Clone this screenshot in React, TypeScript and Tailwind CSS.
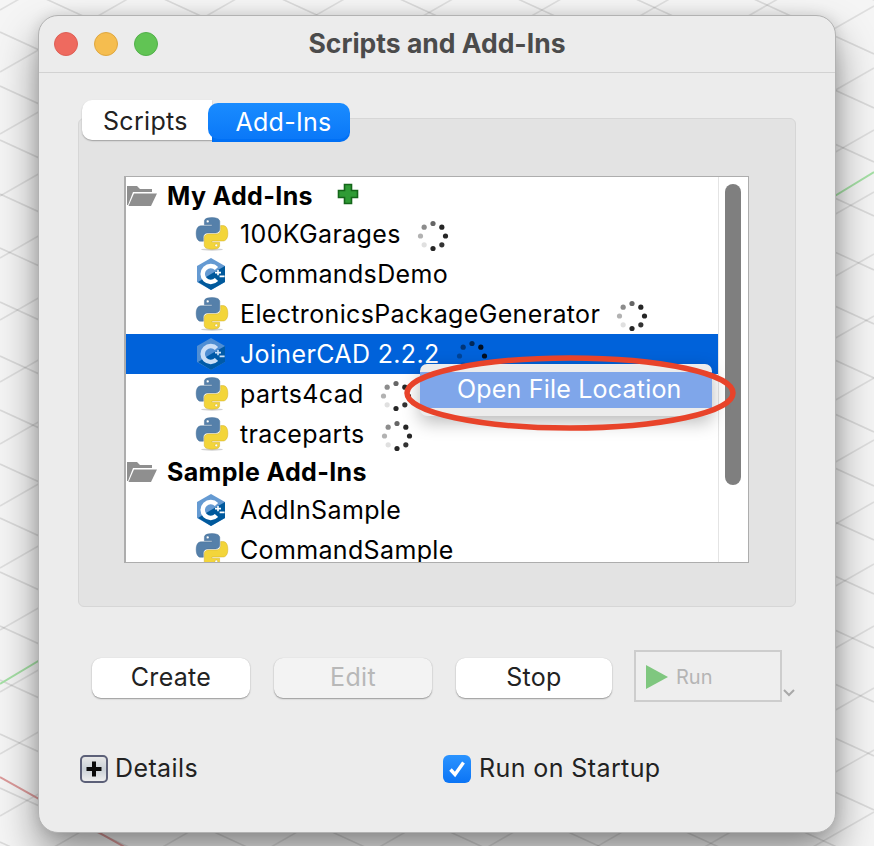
import React from "react";

function Backdrop() {
  const down: string[] = [];
  const up: string[] = [];
  for (let i = -10; i < 30; i++) {
    down.push(`M0 ${i * 54 - 22} L874 ${i * 54 - 22 + 400}`);
    up.push(`M0 ${i * 62 + 10} L874 ${i * 62 + 10 - 500}`);
  }
  return (
    <svg className="absolute inset-0 blur-[0.7px]" width="874" height="846" viewBox="0 0 874 846">
      {down.map((d) => (
        <path key={d} d={d} stroke="#000" strokeOpacity="0.11" strokeWidth="1.6" fill="none" />
      ))}
      {up.map((d) => (
        <path key={d} d={d} stroke="#000" strokeOpacity="0.09" strokeWidth="1.6" fill="none" />
      ))}
      <path d="M0 684 L60 648" stroke="#a5e0a5" strokeWidth="2" />
      <path d="M820 205 L874 172" stroke="#a5e0a5" strokeWidth="2" />
      <path d="M0 777 L130 850" stroke="#dc9a9a" strokeWidth="2" />
    </svg>
  );
}

function PythonIcon() {
  const d =
    "M54.9 0C26.8 0 28.6 12.2 28.6 12.2v12.6h26.8v3.8H17.9S0 26.6 0 54.9s15.7 27.3 15.7 27.3h9.3V69s-.5-15.7 15.4-15.7h26.6s14.9.2 14.9-14.4V14.8S84.2 0 54.9 0zM40.1 8.5a4.8 4.8 0 1 1 0 9.6 4.8 4.8 0 0 1 0-9.6z";
  return (
    <svg width="34" height="34" viewBox="-2 -2 114 118" className="shrink-0">
      <ellipse cx="55" cy="111" rx="38" ry="4" fill="#000" opacity="0.18" />
      <path d={d} fill="#5580aa" stroke="#3d6690" strokeWidth="1.5" />
      <path d={d} fill="#f3d53a" stroke="#c9a51f" strokeWidth="1.5" transform="rotate(180 55 55)" />
    </svg>
  );
}

function CppIcon() {
  return (
    <svg width="32" height="34" viewBox="0 0 32 34" className="shrink-0">
      <path d="M16 1 L30 9 V25 L16 33 L2 25 V9 Z" fill="#659ad2" />
      <path d="M16 17 L30 9 V25 L16 33 L3 25 Z" fill="#00599c" />
      <path d="M21.5 11.5 A8 8 0 1 0 21.5 22.5" fill="none" stroke="#fff" strokeWidth="4.5" />
      <path d="M20 15.6h6M23 13v5.2M24.6 19.4h5" stroke="#fff" strokeWidth="1.6" />
    </svg>
  );
}

function FolderIcon() {
  return (
    <svg width="32" height="22" viewBox="0 0 32 22" className="shrink-0">
      <path d="M1 1 H11 L14 4 H26 V7 H7 L2 20 H1 Z" fill="#8f8f8f" />
      <path d="M8 8.5 H31 L25 21 H2.5 Z" fill="#8f8f8f" />
    </svg>
  );
}

function PlusIcon() {
  return (
    <svg width="22" height="22" viewBox="0 0 22 22" className="shrink-0">
      <path d="M7.5 1.5h7v6h6v7h-6v6h-7v-6h-6v-7h6z" fill="#2f9b35" stroke="#14661a" strokeWidth="1.6" />
    </svg>
  );
}

function Spinner() {
  const ops = [0.6, 0.85, 0.85, 0.8, 0.85, 0.12, 0.3, 0.45];
  return (
    <svg width="32" height="32" viewBox="0 0 32 32" className="ml-4 mt-[4px] shrink-0 blur-[0.4px]">
      {ops.map((o, i) => {
        const a = (i * Math.PI) / 4 - Math.PI / 2;
        return (
          <circle
            key={i}
            cx={16 + 12.5 * Math.cos(a)}
            cy={16 + 12.5 * Math.sin(a)}
            r="2.6"
            fill="#000"
            opacity={o}
          />
        );
      })}
    </svg>
  );
}

function Item({
  label,
  kind,
  spin,
  selected,
}: {
  label: string;
  kind: "py" | "cpp";
  spin?: boolean;
  selected?: boolean;
}) {
  return (
    <div className={`flex h-[40px] shrink-0 items-center pl-[69px] ${selected ? "bg-[#0062da] text-white" : "text-black"}`}>
      <div className={`flex w-[45px] shrink-0 items-center ${selected ? "opacity-80" : ""}`}>
        {kind === "py" ? <PythonIcon /> : <CppIcon />}
      </div>
      <span className="mt-[2px] whitespace-nowrap">{label}</span>
      {spin && <Spinner />}
    </div>
  );
}

function Header({ label, plus, h }: { label: string; plus?: boolean; h: string }) {
  return (
    <div className={`flex shrink-0 items-center font-bold text-black ${h}`}>
      <div className="flex w-[41px] shrink-0 items-center">
        <FolderIcon />
      </div>
      <span className="mt-[2px] whitespace-nowrap">{label}</span>
      {plus && (
        <div className="mb-[3px] ml-[24px]">
          <PlusIcon />
        </div>
      )}
    </div>
  );
}

function Btn({ label, disabled, w }: { label: string; disabled?: boolean; w: string }) {
  return (
    <div
      className={`flex h-[40px] items-center justify-center rounded-[9px] text-[25px] tracking-[0.3px] shadow-[0_1px_1.5px_rgba(0,0,0,0.35),0_0_1px_rgba(0,0,0,0.15)] ${w} ${
        disabled ? "bg-[#f3f3f3] text-[#b8b8b8]" : "bg-white text-[#222]"
      }`}
    >
      {label}
    </div>
  );
}

export default function App() {
  return (
    <div className="relative h-[846px] w-[874px] overflow-hidden bg-[#f5f5f5] font-['Inter','Liberation_Sans',sans-serif]">
      <Backdrop />
      <div className="relative ml-[38px] mt-[15px] flex h-[818px] w-[798px] flex-col rounded-[20px] border border-[#b2b2b2] bg-[#ececec] shadow-[0_22px_42px_rgba(0,0,0,0.42),0_0_14px_rgba(0,0,0,0.12)]">
        {/* title bar */}
        <div className="relative flex h-[57px] shrink-0 items-center justify-center border-b border-[#d2d2d2]">
          <div className="absolute left-[15px] top-[16px] flex gap-[16px]">
            <div className="h-[24px] w-[24px] rounded-full border border-[#de5f55] bg-[#ee6a5f]" />
            <div className="h-[24px] w-[24px] rounded-full border border-[#dfa73f] bg-[#f5bd4f]" />
            <div className="h-[24px] w-[24px] rounded-full border border-[#52b04a] bg-[#61c454]" />
          </div>
          <span className="text-[26.5px] font-bold text-[#4b4b4b]">Scripts and Add-Ins</span>
        </div>

        <div className="flex flex-col px-[39px] pt-[27px]">
          {/* tabs */}
          <div className="relative z-10 ml-[4px] flex h-[42px] items-start text-[25px] tracking-[0.3px]">
            <div className="flex h-[40px] w-[130px] items-center rounded-l-[10px] bg-white pl-[21px] pt-[3px] text-[#222] shadow-[0_1px_1.5px_rgba(0,0,0,0.3)]">
              Scripts
            </div>
            <div className="relative -ml-[4px] mt-[3px] flex h-[36px] w-[142px] items-center justify-center rounded-[10px] bg-gradient-to-b from-[#1a8cff] to-[#0a78f8] pl-[9px] pt-[3px] text-white">
              <div className="absolute -bottom-[3px] left-[4px] right-0 -z-10 h-[20px] rounded-br-[10px] bg-[#0070f5]" />
              Add-Ins
            </div>
          </div>

          {/* group panel */}
          <div className="-mt-[24px] h-[489px] w-[718px] rounded-[6px] border border-[#d6d6d6] bg-[#e3e3e3] pl-[45px] pt-[57px]">
            <div className="flex h-[387px] w-[625px] border border-l-2 border-[#adadad] bg-white">
              <div className="relative flex min-w-0 flex-1 flex-col overflow-hidden text-[25px] tracking-[0.35px]">
                <Header label="My Add-Ins" plus h="h-[37px]" />
                <Item label="100KGarages" kind="py" spin />
                <Item label="CommandsDemo" kind="cpp" />
                <Item label="ElectronicsPackageGenerator" kind="py" spin />
                <Item label="JoinerCAD 2.2.2" kind="cpp" spin selected />
                <Item label="parts4cad" kind="py" spin />
                <Item label="traceparts" kind="py" spin />
                <Header label="Sample Add-Ins" h="h-[36px]" />
                <Item label="AddInSample" kind="cpp" />
                <Item label="CommandSample" kind="py" />
              </div>
              <div className="w-[30px] shrink-0 border-l border-[#e4e4e4] bg-white px-[6px] pt-[7px]">
                <div className="h-[301px] w-[16px] rounded-full bg-[#7f7f7f]" />
              </div>
            </div>
          </div>

          {/* buttons */}
          <div className="ml-[14px] mt-[43px] flex items-start">
            <div className="mt-[8px] flex gap-[24px]">
              <Btn label="Create" w="w-[158px]" />
              <Btn label="Edit" disabled w="w-[158px]" />
              <Btn label="Stop" w="w-[156px]" />
            </div>
            <div className="ml-[22px] flex h-[52px] w-[148px] items-center border-2 border-[#cdcdcd] bg-[#eeeeee] pl-[9px] pt-[2px] text-[20px] text-[#b5b5b5]">
              <svg width="24" height="26" viewBox="0 0 24 26" className="shrink-0">
                <path d="M1 1 L23 13 L1 25 Z" fill="#7fc77f" />
              </svg>
              <span className="ml-[7px]">Run</span>
            </div>
            <svg width="14" height="10" viewBox="0 0 14 10" className="mt-[38px] shrink-0">
              <path d="M2 2 L7 7 L12 2" fill="none" stroke="#a8a8a8" strokeWidth="2" />
            </svg>
          </div>

          {/* footer */}
          <div className="ml-[2px] mt-[48px] flex items-center text-[25px] tracking-[0.4px] text-[#222]">
            <div className="flex h-[28px] w-[28px] items-center justify-center rounded-[5px] border-2 border-[#5c6078] bg-gradient-to-b from-[#e8e8e8] via-[#c9d0d6] to-[#eeeeee]">
              <svg width="18" height="18" viewBox="0 0 18 18">
                <path d="M9 1.5v15M1.5 9h15" stroke="#0a0a0a" strokeWidth="4" />
              </svg>
            </div>
            <span className="ml-[7px]">Details</span>
            <div className="ml-[245px] flex h-[28px] w-[28px] items-center justify-center rounded-[6px] bg-gradient-to-b from-[#2a93ff] to-[#0a74f5]">
              <svg width="20" height="20" viewBox="0 0 20 20">
                <path d="M3.5 10.5 L8 15.5 L16.5 3.5" fill="none" stroke="#fff" strokeWidth="3.4" />
              </svg>
            </div>
            <span className="ml-[8px]">Run on Startup</span>
          </div>
        </div>
      </div>

      {/* context menu */}
      <div className="absolute left-[420px] top-[364px] flex h-[52px] w-[292px] items-center rounded-[7px] bg-[#ececec] shadow-[0_6px_18px_rgba(0,0,0,0.28)]">
        <div className="flex h-[36px] w-full items-center bg-[#7fa6ea] pl-[37px] text-[25px] tracking-[0.2px] text-white">
          Open File Location
        </div>
      </div>

      {/* annotation */}
      <svg className="absolute left-[400px] top-[350px]" width="345" height="90" viewBox="0 0 345 90">
        <ellipse cx="170" cy="43" rx="163" ry="35" fill="none" stroke="#e8432a" strokeWidth="5.5" />
      </svg>
    </div>
  );
}
